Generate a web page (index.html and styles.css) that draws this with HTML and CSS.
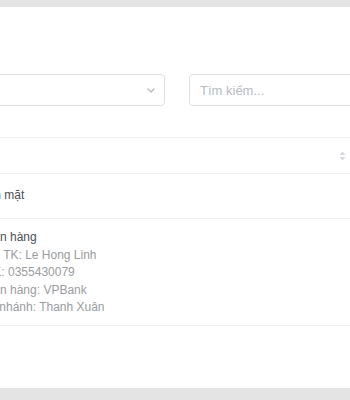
FILE: index.html
```html
<!DOCTYPE html>
<html lang="vi">
<head>
    <meta charset="UTF-8">
    <meta name="viewport" content="width=device-width, initial-scale=1.0">
    <title>Phương thức thanh toán</title>
    <link rel="stylesheet" href="styles.css">
</head>
<body>
<div class="panel">
    <div class="filters">
        <div class="select">
            <span class="select-value"></span>
            <svg class="chevron" width="8" height="5" viewBox="0 0 8 5"><path d="M1 1l3 3 3-3" fill="none" stroke="#b4b7bd" stroke-width="1.3" stroke-linecap="round" stroke-linejoin="round"/></svg>
        </div>
        <input class="search" type="text" placeholder="Tìm kiếm...">
    </div>

    <div class="table">
        <div class="thead">
            <span class="sort">
                <svg width="7" height="10" viewBox="0 0 7 10"><path d="M3.5 0.5L6.5 4H0.5z" fill="#d5d8de"/><path d="M3.5 9.5L6.5 6H0.5z" fill="#d5d8de"/></svg>
            </span>
        </div>
        <div class="trow single">
            <div class="cell">Tiền mặt</div>
        </div>
        <div class="trow multi">
            <div class="cell">
                <div class="title">Ngân hàng</div>
                <div class="info">Chủ TK: Le Hong Linh</div>
                <div class="info">STK: 0355430079</div>
                <div class="info">Ngân hàng: VPBank</div>
                <div class="info">Chi nhánh: Thanh Xuân</div>
            </div>
        </div>
    </div>
</div>
</body>
</html>
```

FILE: styles.css
```css
html, body { margin: 0; padding: 0; }
body { background: #e4e4e4; font-family: "Liberation Sans", Arial, sans-serif; overflow: hidden; }

.panel { background: #fff; margin: 7px 0 0 -22px; height: 381px; padding-top: 67px; box-sizing: border-box; overflow: hidden; }

.filters { display: flex; gap: 24px; }
.select { flex: 0 0 187px; height: 32px; box-sizing: border-box; border: 1px solid #dcdfe6; border-radius: 4px; display: flex; align-items: center; justify-content: flex-end; padding-right: 9px; }
.chevron { display: block; }
.search { flex: 0 0 auto; width: 220px; height: 32px; box-sizing: border-box; border: 1px solid #dcdfe6; border-radius: 4px; padding: 0 10px; font-family: inherit; font-size: 13px; color: #606266; outline: none; }
.search::placeholder { color: #b8bbc2; }

.table { margin-top: 31px; font-size: 12px; color: #4c4e52; }
.thead { height: 37px; box-sizing: border-box; border-top: 1px solid #eef0f4; border-bottom: 1px solid #eef0f4; display: flex; align-items: center; justify-content: flex-end; padding-right: 4px; }
.sort svg { display: block; }
.trow { border-bottom: 1px solid #eef0f4; }
.trow .cell { line-height: 17px; }
.trow.single .cell { padding: 13px 0 14px; }
.trow.multi .cell { padding: 10px 0 8px; line-height: 17.5px; }
.info { color: #9a9ca0; }
```
